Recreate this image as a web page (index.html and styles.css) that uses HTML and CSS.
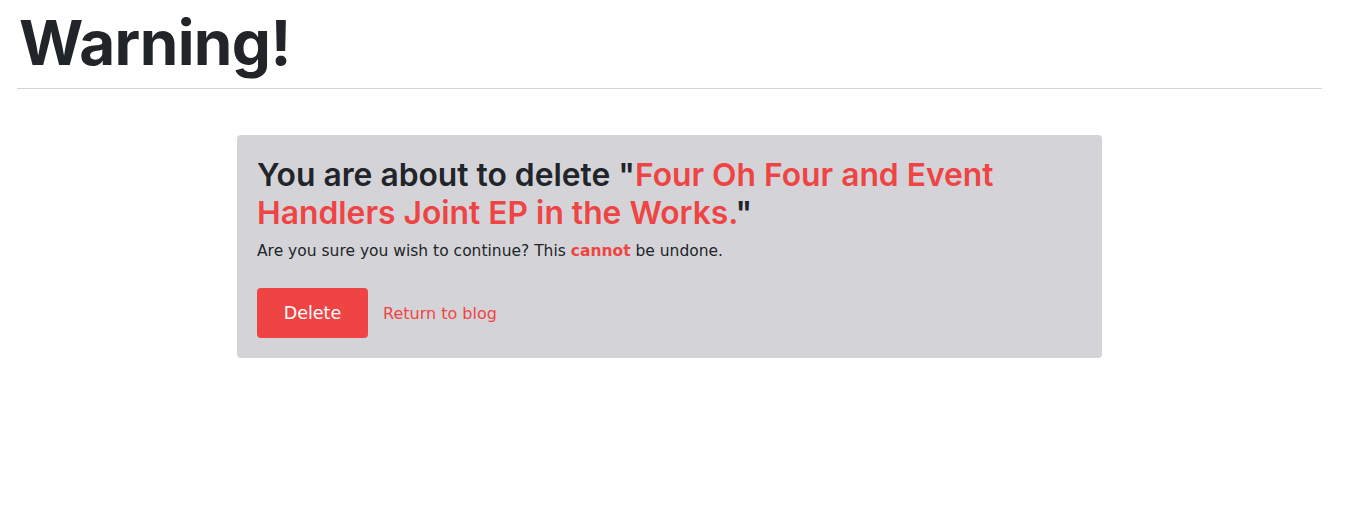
FILE: index.html
```html
<!DOCTYPE html>
<html lang="en">
<head>
<meta charset="utf-8">
<title>Warning</title>
<link rel="stylesheet" href="styles.css">
</head>
<body>
<main class="page">
  <h1 class="page-title">Warning!</h1>
  <hr class="divider">
  <section class="confirm-card">
    <h2 class="confirm-title">You are about to delete "<span class="accent">Four Oh Four and Event Handlers Joint EP in the Works.</span>"</h2>
    <p class="confirm-text">Are you sure you wish to continue? This <strong class="accent">cannot</strong> be undone.</p>
    <div class="actions">
      <button class="btn-delete" type="button">Delete</button>
      <a class="link-return" href="#">Return to blog</a>
    </div>
  </section>
</main>
</body>
</html>
```

FILE: styles.css
```css
* { box-sizing: border-box; }
html, body { margin: 0; padding: 0; background: #fff; }
body {
  font-family: "DejaVu Sans", "Liberation Sans", sans-serif;
  color: #212529;
}
.page {
  padding: 0 39px 0 17px;
}
.page-title {
  font-family: "Inter", "Liberation Sans", sans-serif;
  font-weight: 700;
  font-size: 62px;
  line-height: 1;
  margin: 12px 0 0 2px;
  letter-spacing: -0.6px;
}
.divider {
  border: 0;
  border-top: 1px solid #d4d4d4;
  margin: 14px 0 46px;
}
.confirm-card {
  width: 865px;
  margin: 0 auto;
  background: #d4d4d8;
  border-radius: 4px;
  padding: 21px 20px 20px;
}
.confirm-title {
  font-family: "Inter", "Liberation Sans", sans-serif;
  font-weight: 600;
  font-size: 31.8px;
  line-height: 38px;
  margin: 0 0 7px;
  max-width: 760px;
}
.accent { color: #ef4444; }
.confirm-text {
  font-size: 15.5px;
  line-height: 24px;
  margin: 0 0 25px;
}
.confirm-text strong { font-weight: 700; }
.actions {
  display: flex;
  align-items: center;
  gap: 15px;
}
.btn-delete {
  background: #ef4444;
  color: #fff;
  border: 0;
  border-radius: 4px;
  width: 111px;
  height: 50px;
  font-family: "DejaVu Sans", "Liberation Sans", sans-serif;
  font-size: 17.5px;
  cursor: pointer;
}
.link-return {
  color: #ef4444;
  text-decoration: none;
  font-size: 16px;
}
```
